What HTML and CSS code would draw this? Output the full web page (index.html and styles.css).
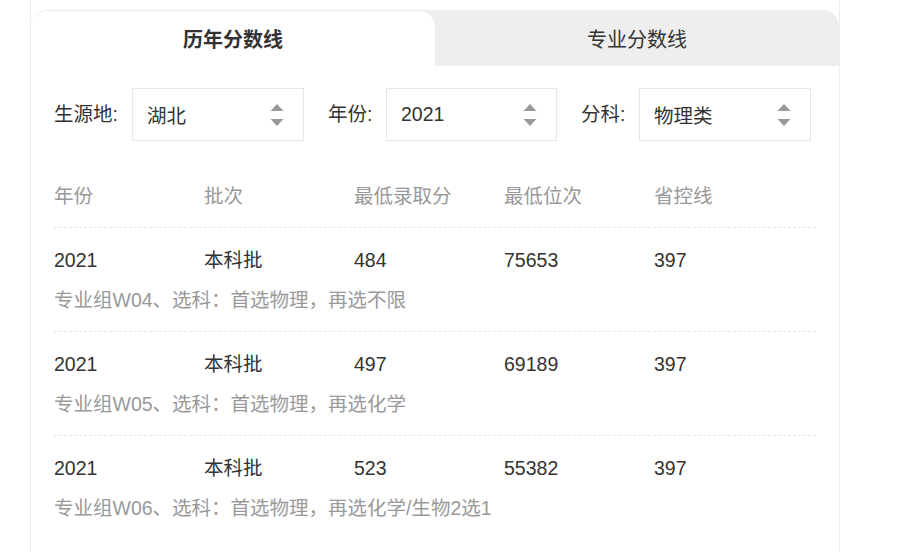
FILE: index.html
```html
<!DOCTYPE html>
<html lang="zh">
<head>
<meta charset="utf-8">
<title>历年分数线</title>
<link rel="stylesheet" href="styles.css">
</head>
<body>
<div class="card">
  <div class="tabs">
    <div class="tab tab-active">历年分数线</div>
    <div class="tab tab-idle">专业分数线</div>
  </div>
  <div class="content">
    <div class="filters">
      <div class="filter">
        <span class="flabel flabel-wide">生源地:</span>
        <div class="select"><span>湖北</span>
          <svg class="arrows" width="14" height="24" viewBox="0 0 14 24"><path d="M7 1 L13.5 8 L0.5 8 Z" fill="#999"/><path d="M0.5 16 L13.5 16 L7 23 Z" fill="#999"/></svg>
        </div>
      </div>
      <div class="filter">
        <span class="flabel">年份:</span>
        <div class="select select-narrow"><span>2021</span>
          <svg class="arrows" width="14" height="24" viewBox="0 0 14 24"><path d="M7 1 L13.5 8 L0.5 8 Z" fill="#999"/><path d="M0.5 16 L13.5 16 L7 23 Z" fill="#999"/></svg>
        </div>
      </div>
      <div class="filter">
        <span class="flabel">分科:</span>
        <div class="select"><span>物理类</span>
          <svg class="arrows" width="14" height="24" viewBox="0 0 14 24"><path d="M7 1 L13.5 8 L0.5 8 Z" fill="#999"/><path d="M0.5 16 L13.5 16 L7 23 Z" fill="#999"/></svg>
        </div>
      </div>
    </div>
    <div class="table">
      <div class="thead">
        <span>年份</span><span>批次</span><span>最低录取分</span><span>最低位次</span><span>省控线</span>
      </div>
      <div class="row">
        <div class="cells"><span>2021</span><span>本科批</span><span>484</span><span>75653</span><span>397</span></div>
        <div class="sub">专业组W04、选科：首选物理，再选不限</div>
      </div>
      <div class="row">
        <div class="cells"><span>2021</span><span>本科批</span><span>497</span><span>69189</span><span>397</span></div>
        <div class="sub">专业组W05、选科：首选物理，再选化学</div>
      </div>
      <div class="row">
        <div class="cells"><span>2021</span><span>本科批</span><span>523</span><span>55382</span><span>397</span></div>
        <div class="sub">专业组W06、选科：首选物理，再选化学/生物2选1</div>
      </div>
    </div>
  </div>
</div>
</body>
</html>
```
FILE: styles.css
```css
html, body {
  margin: 0;
  padding: 0;
  background: #fff;
}
body {
  font-family: "Liberation Sans", "Noto Sans CJK SC", sans-serif;
  color: #333;
  font-size: 19.5px;
}
.card {
  margin-left: 30px;
  width: 808px;
  border-left: 1px solid #eeeeee;
  border-right: 1px solid #eeeeee;
  padding-top: 10px;
  min-height: 542px;
}
.tabs {
  display: flex;
  height: 56px;
}
.tab {
  flex: 0 0 404px;
  display: flex;
  align-items: center;
  justify-content: center;
  font-size: 20px;
  color: #333;
  box-sizing: border-box;
}
.tab-active {
  position: relative;
  z-index: 2;
  background: #fff;
  font-weight: bold;
  border-top: 1px solid #ebebeb;
  border-radius: 16px 16px 0 0;
}
.tab-idle {
  position: relative;
  z-index: 1;
  background: #eeeeee;
  border-radius: 0 16px 0 0;
  margin-left: -16px;
  flex-basis: 420px;
  padding-left: 16px;
}
.content {
  padding: 22px 0 0 23px;
}
.filters {
  display: flex;
  gap: 24px;
  height: 53px;
}
.filter {
  display: flex;
  align-items: center;
}
.flabel {
  color: #333;
  line-height: 53px;
  width: 58px;
}
.flabel-wide {
  width: 78px;
}
.select {
  box-sizing: border-box;
  height: 53px;
  width: 172px;
  border: 1px solid #e6e6e6;
  display: flex;
  align-items: center;
  justify-content: space-between;
  padding: 0 19px 0 14px;
  color: #333;
}
.select-narrow {
  width: 171px;
}
.arrows {
  display: block;
}
.table {
  margin-top: 35px;
  width: 762px;
}
.thead {
  display: grid;
  grid-template-columns: 150px 150px 150px 150px 162px;
  line-height: 40px;
  height: 40px;
  padding-bottom: 11px;
  color: #999;
}
.row {
  border-top: 1px dashed #e6e6e6;
  padding: 12px 0 11px;
}
.cells {
  display: grid;
  grid-template-columns: 150px 150px 150px 150px 162px;
  line-height: 40px;
  height: 40px;
  color: #333;
}
.sub {
  line-height: 40px;
  height: 40px;
  color: #999;
}
```
